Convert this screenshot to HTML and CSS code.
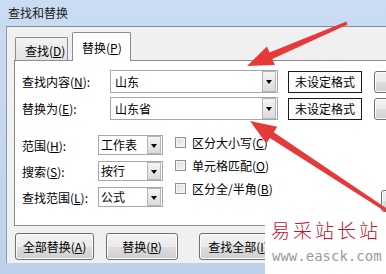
FILE: index.html
```html
<!DOCTYPE html>
<html lang="zh-CN">

<head>
    <meta charset="UTF-8">
    <meta name="viewport" content="width=device-width, initial-scale=1.0">
    <title>查找和替换</title>
    <link rel="stylesheet" href="styles.css">
</head>

<body>
    <div class="window">
        <div class="titlebar">查找和替换</div>
        <div class="client">
            <div class="tabs">
                <div class="tab">查找(<u>D</u>)</div>
                <div class="tab active">替换(<u>P</u>)</div>
            </div>
            <div class="panel">
                <div class="find-grid">
                    <span class="lbl">查找内容(<u>N</u>):</span>
                    <div class="combo"><span>山东</span><i class="drop"></i></div>
                    <div class="fmt">未设定格式</div>
                    <div class="btn fmt-btn"></div>

                    <span class="lbl">替换为(<u>E</u>):</span>
                    <div class="combo"><span>山东省</span><i class="drop"></i></div>
                    <div class="fmt">未设定格式</div>
                    <div class="btn fmt-btn"></div>
                </div>
                <div class="options">
                    <div class="opt-grid">
                        <span class="lbl">范围(<u>H</u>):</span>
                        <div class="select"><span>工作表</span><i class="drop"></i></div>
                        <span class="lbl">搜索(<u>S</u>):</span>
                        <div class="select"><span>按行</span><i class="drop"></i></div>
                        <span class="lbl">查找范围(<u>L</u>):</span>
                        <div class="select"><span>公式</span><i class="drop"></i></div>
                    </div>
                    <div class="checks">
                        <label class="check"><i class="box"></i>区分大小写(<u>C</u>)</label>
                        <label class="check"><i class="box"></i>单元格匹配(<u>O</u>)</label>
                        <label class="check"><i class="box"></i>区分全/半角(<u>B</u>)</label>
                    </div>
                    <div class="btn opt-btn"></div>
                </div>
            </div>
            <div class="actions">
                <div class="btn act-all">全部替换(<u>A</u>)</div>
                <div class="btn act-one">替换(<u>R</u>)</div>
                <div class="btn act-find">查找全部(<u>I</u>)</div>
            </div>
        </div>
    </div>

    <!-- 水印 -->
    <div class="watermark">
        <div class="wm-title">易采站长站</div>
        <div class="wm-url">www.easck.com</div>
    </div>

    <!-- 红色箭头 -->
    <svg class="arrows" width="386" height="274" viewBox="0 0 386 274">
        <polygon fill="#e63a3a"
            points="346.4,21.6 269.5,52.5 266.95,46.52 247,66 274.85,64.88 272.3,58.9 347.6,24.4" />
        <polygon fill="#e63a3a"
            points="392.8,212.7 273.7,132.3 277.3,126.8 250,121 266.3,143.6 269.9,138.1 391.2,215.3" />
    </svg>
</body>

</html>
```

FILE: styles.css
```css
body {
    margin: 0;
    width: 386px;
    height: 274px;
    overflow: hidden;
    position: relative;
    font-family: "Noto Sans CJK SC", sans-serif;
    font-size: 12px;
    color: #000;
    background-color: #fff;
}

u {
    text-decoration: underline;
    text-underline-offset: 1px;
}

.window {
    width: 460px;
    height: 274px;
    box-sizing: border-box;
    padding: 0 0 11px 6px;
    background: linear-gradient(#cadcf1, #bdd2ea);
}

.titlebar {
    height: 26px;
    line-height: 26px;
    padding-left: 2px;
    color: #1a1a1a;
}

.client {
    height: 237px;
    box-sizing: border-box;
    background-color: #f0f0f0;
    border-top: 1px solid #7d8b9c;
    border-left: 1px solid #8c9cb0;
    padding: 5px 0 0 7px;
}

.tabs {
    display: flex;
    align-items: flex-start;
    height: 28px;
    margin-left: 1px;
}

.tab {
    box-sizing: border-box;
    height: 23px;
    width: 53px;
    margin-top: 5px;
    padding: 4px 0 0 9px;
    border: 1px solid #898c95;
    border-bottom: none;
    border-radius: 2px 2px 0 0;
    background: linear-gradient(#f2f2f2, #e3e3e3);
}

.tab.active {
    position: relative;
    z-index: 1;
    width: 59px;
    height: 29px;
    margin-top: 0;
    margin-left: 4px;
    padding: 6px 0 0 9px;
    background: #fff;
}

.panel {
    background-color: #fff;
    border: 1px solid #898c95;
    padding: 9px 0 13px 7px;
}

.find-grid {
    display: grid;
    grid-template-columns: 78px 168px 74px 90px;
    grid-auto-rows: 23px;
    column-gap: 10px;
    row-gap: 4px;
    align-items: center;
}

.lbl {
    white-space: nowrap;
}

.combo,
.select {
    position: relative;
    box-sizing: border-box;
    height: 23px;
    border: 1px solid #a5a7ad;
    background: #fff;
    padding-left: 4px;
    line-height: 21px;
}

.drop {
    position: absolute;
    top: 0;
    right: 1px;
    width: 14px;
    height: 21px;
    box-sizing: border-box;
    border: 1px solid #b4b6ba;
    background: linear-gradient(#f4f4f4, #dcdcdc);
}

.drop::after {
    content: "";
    position: absolute;
    left: 3px;
    top: 8px;
    border-left: 3.5px solid transparent;
    border-right: 3.5px solid transparent;
    border-top: 4px solid #000;
}

.fmt {
    box-sizing: border-box;
    height: 22px;
    border: 1px solid #1a1a1a;
    background: #fbfbfb;
    text-align: center;
    line-height: 20px;
}

.btn {
    box-sizing: border-box;
    border: 1px solid #707070;
    border-radius: 3px;
    box-shadow: inset 0 0 0 1px #fcfcfc;
    background: linear-gradient(#f2f2f2 0%, #ebebeb 50%, #dddddd 51%, #cfcfcf 100%);
    white-space: nowrap;
}

.fmt-btn {
    height: 22px;
    margin-left: 2px;
}

.options {
    display: flex;
    align-items: flex-start;
    margin-top: 15px;
}

.opt-grid {
    display: grid;
    grid-template-columns: 76px 65px;
    grid-auto-rows: 20px;
    row-gap: 6px;
    align-items: center;
}

.select {
    height: 20px;
    line-height: 18px;
    padding-left: 2px;
}

.select .drop {
    height: 18px;
}

.select .drop::after {
    top: 7px;
}

.checks {
    display: flex;
    flex-direction: column;
    width: 196px;
    margin: -4px 0 0 12px;
}

.check {
    display: flex;
    align-items: center;
    height: 23px;
}

.box {
    width: 11px;
    height: 11px;
    margin-right: 6px;
    border: 1px solid #8e8f8f;
    box-sizing: border-box;
    background: linear-gradient(135deg, #dcdcdc, #f7f7f7);
    box-shadow: inset 0 0 0 1px #f4f4f4;
}

.opt-btn {
    height: 22px;
    width: 70px;
    margin: 55px 0 0 10px;
}

.actions {
    display: flex;
    margin: 7px 0 0 1px;
}

.actions .btn {
    height: 27px;
    line-height: 25px;
    text-align: center;
}

.act-all {
    width: 79px;
}

.act-one {
    width: 72px;
    margin-left: 12px;
}

.act-find {
    width: 78px;
    margin-left: 21px;
}

.watermark {
    position: absolute;
    left: 265px;
    top: 213px;
    width: 121px;
    height: 61px;
    background: #fff;
}

.wm-title {
    margin: 4px 0 0 6px;
    font-size: 19px;
    font-weight: 300;
    line-height: 25px;
    letter-spacing: 3px;
    color: #c8102e;
    white-space: nowrap;
}

.wm-url {
    margin: 5px 0 0 7px;
    font-family: "DejaVu Sans Mono", monospace;
    font-size: 14px;
    line-height: 18px;
    color: #9a9a9a;
    white-space: nowrap;
}

.arrows {
    position: absolute;
    left: 0;
    top: 0;
    pointer-events: none;
}
```
